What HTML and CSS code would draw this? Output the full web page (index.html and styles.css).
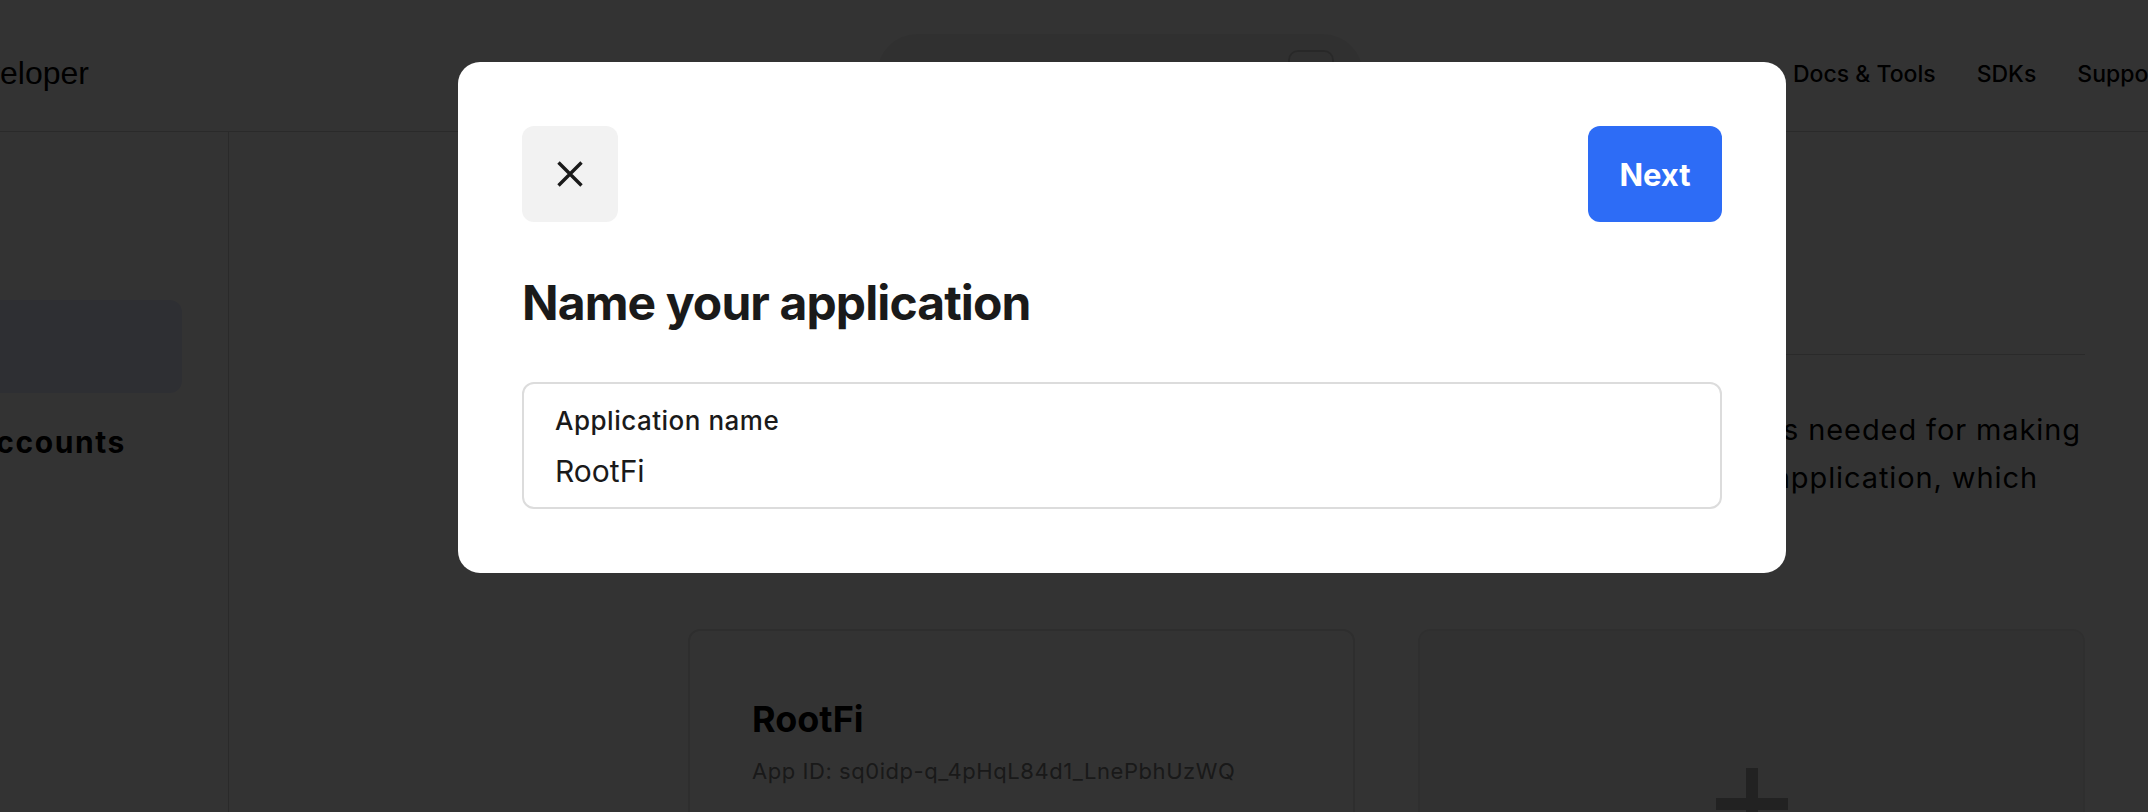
FILE: index.html
```html
<!DOCTYPE html>
<html lang="en">
<head>
<meta charset="utf-8">
<title>Square Developer – Applications</title>
<link rel="stylesheet" href="styles.css">
</head>
<body>
<div class="app">
  <header class="topbar">
    <div class="brand-slot"><a class="brand" href="#">Square Developer</a></div>
    <div class="search">
      <svg class="search-icon" width="26" height="26" viewBox="0 0 26 26" aria-hidden="true"><circle cx="11" cy="11" r="8" fill="none" stroke="#1a1a1a" stroke-width="2.5"/><path d="M17 17l7 7" stroke="#1a1a1a" stroke-width="2.5"/></svg>
      <kbd class="kbd">/</kbd>
    </div>
    <nav class="topnav">
      <a href="#">Docs &amp; Tools</a>
      <a href="#">SDKs</a>
      <a href="#">Support</a>
    </nav>
  </header>
  <div class="layout">
    <aside class="sidebar">
      <a class="side-item is-active" href="#" aria-label="Applications"></a>
      <div class="side-title"><span>Sandbox test accounts</span></div>
    </aside>
    <main class="main">
      <div class="content">
        <div class="page-head"></div>
        <div class="divider"></div>
        <p class="intro">
          <span class="intro-line">An application is the set of credentials needed for making</span>
          <span class="intro-line short">API calls on behalf of a seller. Start by creating an application, which</span>
        </p>
        <div class="cards">
          <article class="app-card">
            <h2 class="app-name">RootFi</h2>
            <p class="app-id">App ID: sq0idp-q_4pHqL84d1_LnePbhUzWQ</p>
          </article>
          <div class="app-card add-card" aria-label="Create application">
            <span class="plus"></span>
          </div>
        </div>
      </div>
    </main>
  </div>
</div>

<div class="overlay"></div>

<div class="modal" role="dialog" aria-labelledby="modal-title">
  <div class="modal-head">
    <button class="close-btn" type="button" aria-label="Close">
      <svg width="28" height="28" viewBox="0 0 28 28" aria-hidden="true"><path d="M2.5 2.5L25.5 25.5M25.5 2.5L2.5 25.5" stroke="#1a1a1a" stroke-width="3.4" fill="none"/></svg>
    </button>
    <button class="next-btn" type="button">Next</button>
  </div>
  <h2 class="modal-title" id="modal-title">Name your application</h2>
  <label class="field">
    <span class="field-label">Application name</span>
    <input class="field-input" type="text" value="RootFi">
  </label>
</div>
</body>
</html>
```
FILE: styles.css
```css
html, body {
  margin: 0;
  padding: 0;
  background: #ffffff;
}

body {
  font-family: Inter, "Noto Sans", sans-serif;
  color: #000;
}

.app {
  width: 100vw;
  height: 100vh;
  overflow: hidden;
  display: flex;
  flex-direction: column;
}

/* ---------- top bar ---------- */
.topbar {
  box-sizing: border-box;
  height: 132px;
  padding-top: 16px;
  border-bottom: 1px solid #d2d2d2;
  display: flex;
  align-items: center;
  flex: none;
}

.brand-slot {
  width: 89px;
  flex: none;
  display: flex;
  justify-content: flex-end;
  white-space: nowrap;
}

.brand {
  font-family: "Liberation Sans", Arial, sans-serif;
  font-size: 32px;
  font-weight: 400;
  color: #000;
  text-decoration: none;
}

.search {
  box-sizing: border-box;
  flex: none;
  margin-left: 788px;
  width: 486px;
  height: 80px;
  border-radius: 40px;
  background: #f0f0f0;
  display: flex;
  align-items: center;
  justify-content: space-between;
  padding: 0 29px 0 40px;
}

.kbd {
  box-sizing: border-box;
  width: 46px;
  height: 48px;
  border: 2px solid #c8c8c8;
  border-radius: 10px;
  display: flex;
  align-items: center;
  justify-content: center;
  font-family: Inter, sans-serif;
  font-size: 20px;
  color: #1a1a1a;
}

.topnav {
  flex: none;
  margin-left: 430px;
  display: flex;
  gap: 41px;
  white-space: nowrap;
}

.topnav a {
  font-size: 23px;
  font-weight: 500;
  color: #000;
  text-decoration: none;
}

/* ---------- layout ---------- */
.layout {
  flex: 1;
  display: flex;
}

.sidebar {
  width: 228px;
  flex: none;
  border-right: 1px solid #d2d2d2;
  padding-top: 168px;
  display: flex;
  flex-direction: column;
}

.side-item {
  display: block;
  width: 182px;
  height: 93px;
  border-radius: 0 12px 12px 0;
  background: #e6ebff;
}

.side-title {
  margin-top: 31px;
  width: 126px;
  display: flex;
  justify-content: flex-end;
  white-space: nowrap;
  font-size: 30px;
  line-height: 36px;
  font-weight: 700;
  letter-spacing: 1.6px;
  color: #000;
}

.main {
  flex: 1;
  min-width: 0;
}

.content {
  margin-left: 459px;
  width: 1397px;
}

.page-head {
  height: 222px;
}

.divider {
  height: 1px;
  background: #d2d2d2;
}

.intro {
  margin: 51px 0 0;
  font-size: 29px;
  line-height: 48px;
  letter-spacing: 0.9px;
  color: #000;
}

.intro-line {
  display: flex;
  justify-content: flex-end;
  white-space: nowrap;
  padding-right: 4px;
}

.intro-line.short {
  padding-right: 47px;
}

.cards {
  margin-top: 127px;
  display: grid;
  grid-template-columns: 1fr 1fr;
  gap: 63px;
}

.app-card {
  box-sizing: border-box;
  min-height: 360px;
  border: 2px solid #e3e3e3;
  border-radius: 12px;
  padding: 67px 62px 40px;
}

.app-name {
  margin: 0;
  font-size: 36px;
  line-height: 43px;
  font-weight: 700;
  color: #000;
}

.app-id {
  margin: 14px 0 0;
  font-size: 22px;
  line-height: 33px;
  letter-spacing: 0.55px;
  color: #7c7c7c;
}

.add-card {
  background: #f5f5f5;
  border-color: #ececec;
  display: flex;
  justify-content: center;
  padding-top: 137px;
}

.plus {
  position: relative;
  width: 72px;
  height: 72px;
}

.plus::before,
.plus::after {
  content: "";
  position: absolute;
  background: #aaaaaa;
}

.plus::before {
  left: 30px;
  top: 0;
  width: 12px;
  height: 72px;
}

.plus::after {
  left: 0;
  top: 30px;
  width: 72px;
  height: 12px;
}

/* ---------- modal ---------- */
.overlay {
  position: fixed;
  inset: 0;
  background: rgba(0, 0, 0, 0.8);
}

.modal {
  position: fixed;
  left: 458px;
  top: 62px;
  width: 1328px;
  box-sizing: border-box;
  padding: 64px;
  background: #ffffff;
  border-radius: 22px;
  color: #1a1a1a;
}

.modal-head {
  display: flex;
  justify-content: space-between;
  align-items: center;
}

.close-btn {
  width: 96px;
  height: 96px;
  border: 0;
  border-radius: 12px;
  background: #f2f2f2;
  display: flex;
  align-items: center;
  justify-content: center;
  padding: 0;
}

.next-btn {
  width: 134px;
  height: 96px;
  border: 0;
  border-radius: 12px;
  background: #2d6cf6;
  color: #ffffff;
  font-family: Inter, sans-serif;
  font-size: 31px;
  font-weight: 700;
  padding: 0;
}

.modal-title {
  margin: 52px 0 0;
  font-size: 48px;
  line-height: 58px;
  font-weight: 700;
  letter-spacing: -0.9px;
  color: #1a1a1a;
}

.field {
  margin-top: 50px;
  display: flex;
  flex-direction: column;
  border: 2px solid #dcdcdc;
  border-radius: 12px;
  padding: 22px 31px 18px;
}

.field-label {
  font-size: 26px;
  line-height: 30px;
  font-weight: 500;
  letter-spacing: 0.5px;
  color: #1a1a1a;
}

.field-input {
  margin-top: 17px;
  height: 36px;
  border: 0;
  padding: 0;
  outline: none;
  background: transparent;
  font-family: Inter, sans-serif;
  font-size: 30px;
  line-height: 36px;
  color: #1a1a1a;
}
```
